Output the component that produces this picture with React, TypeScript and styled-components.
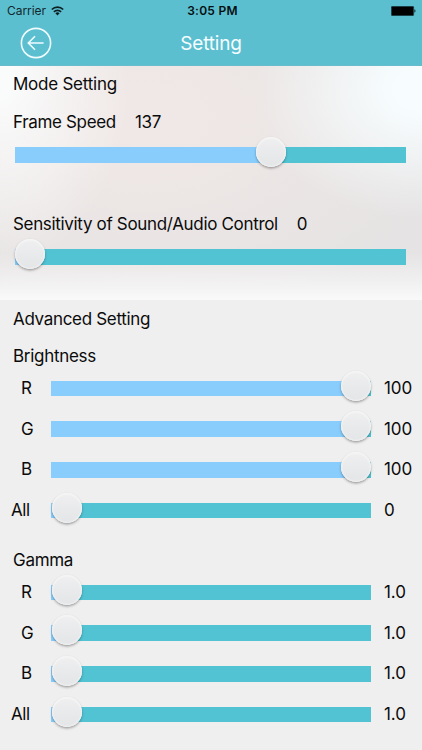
import React from "react";
import styled, { createGlobalStyle } from "styled-components";

const GlobalStyle = createGlobalStyle`
  * { box-sizing: border-box; }
  body { margin: 0; background: #efefef; }
`;

const Screen = styled.main`
  width: 422px;
  height: 750px;
  overflow: hidden;
  background: #efefef;
  color: #0b0b0b;
  font-family: Inter, "Liberation Sans", sans-serif;
  font-size: 17px;
`;

const Header = styled.header`
  height: 66px;
  background: #5cbfd0;
  border-bottom: 1px solid #68bccb;
`;

const StatusBar = styled.div`
  height: 22px;
  display: grid;
  grid-template-columns: 1fr auto 1fr;
  align-items: center;
  padding: 0 6px 0 7px;
  font-size: 12px;
  line-height: 22px;
`;

const Carrier = styled.div`
  display: flex;
  align-items: center;
  gap: 5px;
  letter-spacing: -0.05px;
  color: #12292e;
`;

const Clock = styled.div`
  font-weight: 600;
  margin-left: 2px;
  letter-spacing: 0.25px;
  color: #071012;
`;

const Battery = styled.svg`
  justify-self: end;
`;

const NavBar = styled.div`
  height: 43px;
  display: grid;
  grid-template-columns: 60px 1fr 60px;
  align-items: center;
`;

const BackButton = styled.button`
  width: 32px;
  height: 32px;
  margin: 0 0 1px 20px;
  padding: 0;
  border: 0;
  background: none;

  svg { display: block; }
`;

const NavTitle = styled.h1`
  margin: 0;
  text-align: center;
  font-size: 19px;
  line-height: 24px;
  font-weight: 400;
  letter-spacing: -0.2px;
  color: #f4fdff;
`;

const ModeSection = styled.section`
  height: 234px;
  background:
    linear-gradient(to bottom, rgba(249, 249, 249, 0) 80%, #f9f9f9 100%),
    radial-gradient(ellipse 170px 130px at 100% 10%, #f7fdff 15%, rgba(247, 253, 255, 0) 100%),
    radial-gradient(ellipse 130px 190px at 0 5%, #fafbfb 10%, rgba(250, 251, 251, 0) 100%),
    radial-gradient(ellipse 320px 200px at 34% 22%, #f0e8e6 10%, rgba(240, 232, 230, 0) 100%),
    #e5e3e3;
`;

const SectionTitle = styled.h2<{ $line: number; $tracking: number }>`
  margin: 0;
  height: 37px;
  padding-left: 13px;
  font-size: 17px;
  line-height: ${(p) => p.$line}px;
  font-weight: 400;
  letter-spacing: ${(p) => p.$tracking}px;
`;

const Setting = styled.div`
  height: 102px;
  padding: 0 16px 0 15px;
`;

const SettingLabel = styled.div<{ $tracking: number }>`
  display: flex;
  gap: 19px;
  height: 44px;
  margin-left: -2px;
  line-height: 38px;
  letter-spacing: ${(p) => p.$tracking}px;
`;

const GroupTitle = styled.h3<{ $height: number }>`
  margin: 0;
  height: ${(p) => p.$height}px;
  padding: 0 0 0 13px;
  display: flex;
  align-items: flex-end;
  font-size: 17px;
  line-height: 24px;
  font-weight: 400;
  letter-spacing: -0.3px;
`;

const ChannelRow = styled.div`
  height: 40.75px;
  display: grid;
  grid-template-columns: 51px 320px 51px;
  align-items: center;
`;

const ChannelName = styled.span<{ $wide?: boolean }>`
  padding: 0 0 1px ${(p) => (p.$wide ? 11 : 21)}px;
  line-height: 20px;
  letter-spacing: -0.4px;
`;

const ChannelValue = styled.span`
  padding: 0 0 1px 13px;
  line-height: 20px;
  letter-spacing: -0.1px;
`;

const Track = styled.div`
  position: relative;
  height: 15.5px;
  background: #51c3d3;
`;

const Fill = styled.div`
  height: 100%;
  background: #88cdfb;
`;

const Knob = styled.div`
  position: absolute;
  top: -10px;
  width: 30px;
  height: 30px;
  margin-left: -15px;
  border-radius: 50%;
  background: linear-gradient(#efeff0, #e3e5e7);
  box-shadow:
    0 1.5px 2.5px rgba(0, 0, 0, 0.34),
    inset 0 1px 2px 0.5px #f6f6f6,
    inset 0 -1px 2px 0 #efeff0;
`;

function Slider({ length, at, inset }: { length: number; at: number; inset: number }) {
  const left = inset + (length - 2 * inset) * at;
  return (
    <Track>
      <Fill style={{ width: left }} />
      <Knob style={{ left }} />
    </Track>
  );
}

type Channel = { name: string; value: string; at: number };

const brightness: Channel[] = [
  { name: "R", value: "100", at: 1 },
  { name: "G", value: "100", at: 1 },
  { name: "B", value: "100", at: 1 },
  { name: "All", value: "0", at: 0 },
];

const gamma: Channel[] = ["R", "G", "B", "All"].map((name) => ({ name, value: "1.0", at: 0 }));

function Channels({ items }: { items: Channel[] }) {
  return (
    <>
      {items.map((c) => (
        <ChannelRow key={c.name}>
          <ChannelName $wide={c.name === "All"}>{c.name}</ChannelName>
          <Slider length={320} at={c.at} inset={15.5} />
          <ChannelValue>{c.value}</ChannelValue>
        </ChannelRow>
      ))}
    </>
  );
}

export default function App() {
  return (
    <Screen>
      <GlobalStyle />
      <Header>
        <StatusBar>
          <Carrier>
            Carrier
            <svg width="13" height="10" viewBox="0 0 13 10" fill="none" stroke="#0c2024" strokeWidth="1.7">
              <path d="M.8 3.5a8.1 8.1 0 0 1 11.4 0" />
              <path d="M2.9 5.8a5.1 5.1 0 0 1 7.2 0" />
              <path d="M6.5 9.4 4.4 7.3a3 3 0 0 1 4.2 0Z" fill="#0c2024" stroke="none" />
            </svg>
          </Carrier>
          <Clock>3:05 PM</Clock>
          <Battery width="25" height="10" viewBox="0 0 25 10">
            <rect x=".3" y=".3" width="22.4" height="9.4" rx="1" fill="#000" stroke="#245159" strokeWidth=".6" />
            <path d="M23.4 3.3c1.5.3 1.5 3.1 0 3.4Z" fill="#12292d" />
          </Battery>
        </StatusBar>
        <NavBar>
          <BackButton aria-label="Back">
            <svg width="32" height="32" viewBox="0 0 32 32" fill="none" stroke="#effcff" strokeWidth="1.6">
              <circle cx="16" cy="16" r="14.6" />
              <path d="M23.6 16H8.7M15 9.3 8.3 16l6.7 6.7" />
            </svg>
          </BackButton>
          <NavTitle>Setting</NavTitle>
        </NavBar>
      </Header>
      <ModeSection>
        <SectionTitle $line={37} $tracking={-0.24}>Mode Setting</SectionTitle>
        <Setting>
          <SettingLabel $tracking={-0.34}>
            <span>Frame Speed</span>
            <span>137</span>
          </SettingLabel>
          <Slider length={391} at={0.667} inset={15} />
        </Setting>
        <Setting>
          <SettingLabel $tracking={-0.33}>
            <span>Sensitivity of Sound/Audio Control</span>
            <span>0</span>
          </SettingLabel>
          <Slider length={391} at={0} inset={15} />
        </Setting>
      </ModeSection>
      <section>
        <SectionTitle $line={38} $tracking={-0.32}>Advanced Setting</SectionTitle>
        <GroupTitle $height={31}>Brightness</GroupTitle>
        <Channels items={brightness} />
        <GroupTitle $height={41}>Gamma</GroupTitle>
        <Channels items={gamma} />
      </section>
    </Screen>
  );
}
